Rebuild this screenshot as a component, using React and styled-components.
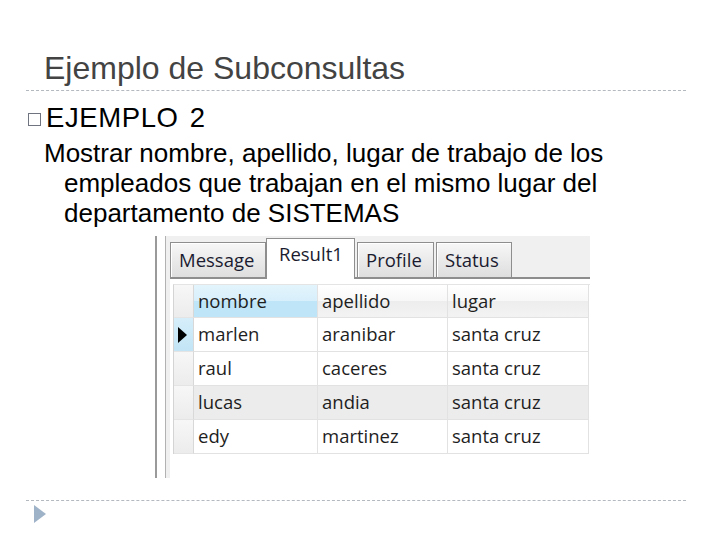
import React from 'react';
import styled, { createGlobalStyle } from 'styled-components';

const GlobalStyle = createGlobalStyle`
    html, body {
        margin: 0;
        padding: 0;
        background: #ffffff;
    }
`;

const Slide = styled.div`
    width: 720px;
    height: 540px;
    background: #ffffff;
    display: flex;
    flex-direction: column;
    font-family: "Liberation Sans", Arial, sans-serif;
    overflow: hidden;
`;

const Title = styled.h1`
    margin: 50px 0 0 44px;
    font-size: 32px;
    line-height: 36px;
    font-weight: normal;
    color: #434343;
`;

const Rule = styled.div`
    margin: ${p => p.$top}px 34px 0 26px;
    height: 0;
    border-top: 1px dashed #b4b9c0;
`;

const Bullet = styled.div`
    display: flex;
    align-items: center;
    margin: 12px 0 0 28px;
    font-size: 27.5px;
    line-height: 30px;
    letter-spacing: 0.6px;
    word-spacing: 3px;
    color: #000000;
`;

const Box = styled.span`
    width: 11px;
    height: 11px;
    border: 1px solid #6f7480;
    margin: 3px 5px 0 0;
`;

const Para = styled.p`
    margin: 5px 70px 0 0;
    padding-left: 64px;
    text-indent: -20px;
    font-size: 26px;
    line-height: 30px;
    color: #000000;
`;

const Shot = styled.div`
    margin: 8px 0 0 155px;
    width: 435px;
    height: 242px;
    display: flex;
    font-family: "Open Sans", "Noto Sans", sans-serif;
    background: #f0f0f0;
`;

const Edge = styled.div`
    width: 8px;
    flex: none;
    border-left: 2px solid #9a9a9a;
    border-right: 1px solid #b2b2b2;
    margin-right: 4px;
    background: #ffffff;
`;

const Panel = styled.div`
    flex: 1;
    display: flex;
    flex-direction: column;
`;

const TabStrip = styled.div`
    height: 41px;
    display: flex;
    align-items: flex-end;
    border-bottom: 2px solid #8d8d8d;
`;

const Tab = styled.div`
    box-sizing: border-box;
    height: ${p => (p.$active ? 41 : 35)}px;
    margin-bottom: ${p => (p.$active ? -2 : 0)}px;
    width: ${p => p.$w}px;
    margin-right: ${p => p.$gap}px;
    border: 1px solid #8e8e8e;
    border-bottom: none;
    background: ${p => (p.$active ? '#ffffff' : 'linear-gradient(#f7f7f7, #dedede)')};
    font-size: 18.5px;
    color: #1b1b30;
    padding: ${p => (p.$active ? '1px 0 0 12px' : '3px 0 0 8px')};
    line-height: 28px;
    box-shadow: ${p => (p.$active ? 'none' : 'inset 1px 1px 0 #ffffff')};
`;

const GridArea = styled.div`
    flex: 1;
    background: #ffffff;
    padding: 5px 0 0 3px;
`;

const Grid = styled.div`
    width: 416px;
    display: grid;
    grid-template-columns: 20px 124px 130px 141px;
    border-left: 1px solid #d4d4d4;
    border-top: 1px solid #e4e4e4;
`;

const Cell = styled.div`
    box-sizing: border-box;
    height: ${p => (p.$head ? 33 : 34)}px;
    border-right: 1px solid #e2e2e2;
    border-bottom: 1px solid #e2e2e2;
    padding-left: 4px;
    font-size: 18.5px;
    line-height: 32px;
    color: #1e1e1e;
    white-space: nowrap;
    overflow: hidden;
    background: ${p => p.$bg};
`;

const RowHead = styled.div`
    box-sizing: border-box;
    height: ${p => (p.$head ? 33 : 34)}px;
    border-right: 1px solid #d8d8d8;
    border-bottom: 1px solid #e4e4e4;
    background: ${p => (p.$current ? 'linear-gradient(#d6eefa, #c2e4f5)' : 'linear-gradient(#f7f7f7, #ececec)')};
    display: flex;
    align-items: center;
    padding-left: 4px;
`;

const Arrow = styled.span`
    width: 0;
    height: 0;
    border-top: 8px solid transparent;
    border-bottom: 8px solid transparent;
    border-left: 9px solid #000000;
`;

const Foot = styled.div`
    margin: 4px 0 0 34px;
    width: 0;
    height: 0;
    border-top: 9px solid transparent;
    border-bottom: 9px solid transparent;
    border-left: 12px solid #9fb3c8;
`;

const tabs = [
    { label: 'Message', w: 96, gap: 0 },
    { label: 'Result1', w: 89, gap: 2, active: true },
    { label: 'Profile', w: 77, gap: 2 },
    { label: 'Status', w: 76, gap: 0 },
];

const headers = ['nombre', 'apellido', 'lugar'];

const rows = [
    { nombre: 'marlen', apellido: 'aranibar', lugar: 'santa cruz', current: true },
    { nombre: 'raul', apellido: 'caceres', lugar: 'santa cruz' },
    { nombre: 'lucas', apellido: 'andia', lugar: 'santa cruz', shaded: true },
    { nombre: 'edy', apellido: 'martinez', lugar: 'santa cruz' },
];

function App() {
    return (
        <Slide>
            <GlobalStyle />
            <Title>Ejemplo de Subconsultas</Title>
            <Rule $top={4} />
            <Bullet>
                <Box />
                EJEMPLO 2
            </Bullet>
            <Para>
                Mostrar nombre, apellido, lugar de trabajo de los empleados que trabajan en el mismo lugar del departamento de SISTEMAS
            </Para>
            <Shot>
                <Edge />
                <Panel>
                    <TabStrip>
                        {tabs.map(t => (
                            <Tab key={t.label} $w={t.w} $gap={t.gap} $active={t.active}>
                                {t.label}
                            </Tab>
                        ))}
                    </TabStrip>
                    <GridArea>
                        <Grid>
                            <RowHead $head />
                            {headers.map((h, i) => (
                                <Cell
                                    key={h}
                                    $head
                                    $bg={i === 0 ? 'linear-gradient(#e3f4fc 0%, #d7effb 50%, #bfe6f8 51%, #bfe6f8 100%)' : 'linear-gradient(#ffffff 0%, #f7f7f7 50%, #ededed 51%, #f3f3f3 100%)'}
                                >
                                    {h}
                                </Cell>
                            ))}
                            {rows.map(r => (
                                <React.Fragment key={r.nombre}>
                                    <RowHead $current={r.current}>
                                        {r.current && <Arrow />}
                                    </RowHead>
                                    {headers.map(h => (
                                        <Cell key={h} $bg={r.shaded ? '#ececec' : '#ffffff'}>
                                            {r[h]}
                                        </Cell>
                                    ))}
                                </React.Fragment>
                            ))}
                        </Grid>
                    </GridArea>
                </Panel>
            </Shot>
            <Rule $top={22} />
            <Foot />
        </Slide>
    );
}

export default App;
